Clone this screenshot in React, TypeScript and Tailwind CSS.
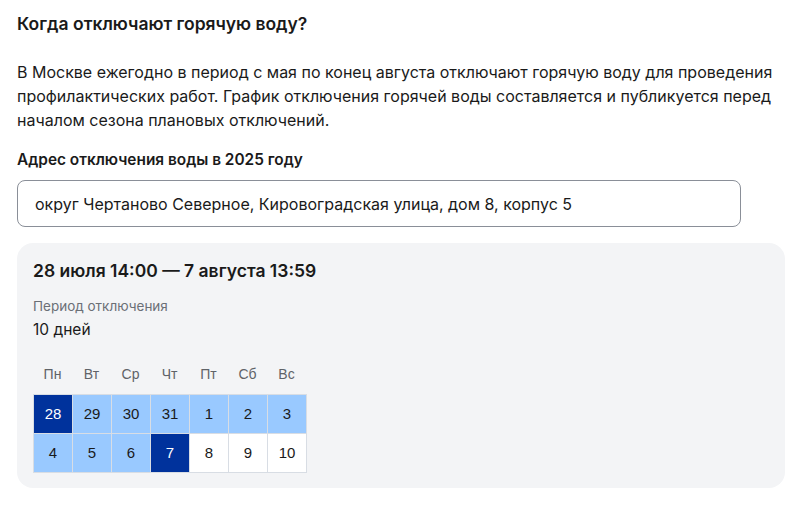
const days = [
  { d: 28, kind: "edge" },
  { d: 29, kind: "in" },
  { d: 30, kind: "in" },
  { d: 31, kind: "in" },
  { d: 1, kind: "in" },
  { d: 2, kind: "in" },
  { d: 3, kind: "in" },
  { d: 4, kind: "in" },
  { d: 5, kind: "in" },
  { d: 6, kind: "in" },
  { d: 7, kind: "edge" },
  { d: 8, kind: "out" },
  { d: 9, kind: "out" },
  { d: 10, kind: "out" },
]

const weekDays = ["Пн", "Вт", "Ср", "Чт", "Пт", "Сб", "Вс"]

const cellClass = (kind: string) => {
  if (kind === "edge") return "bg-[#00329c] text-white"
  if (kind === "in") return "bg-[#99c9ff] text-[#1a1a1a]"
  return "bg-white text-[#1a1a1a]"
}

export default function App() {
  return (
    <div className="min-h-screen bg-white text-[#1a1a1a] font-['Inter',sans-serif] px-[17px] pt-[12px]">
      {/*Header*/}
      <h2 className="text-[17.5px] font-semibold leading-[24px]">Когда отключают горячую воду?</h2>

      <p className="mt-[24px] text-[16px] leading-[24px]">
        В Москве ежегодно в период с мая по конец августа отключают горячую воду для проведения
        профилактических работ. График отключения горячей воды составляется и публикуется перед
        началом сезона плановых отключений.
      </p>

      {/*Address*/}
      <div className="mt-[17px] text-[15.4px] font-semibold leading-[22px]">Адрес отключения воды в 2025 году</div>
      <div className="mt-[9px] w-[724px] h-[47px] border border-[#8a8f98] rounded-[8px] flex items-center px-[17px] text-[16px]">
        округ Чертаново Северное, Кировоградская улица, дом 8, корпус 5
      </div>

      {/*Card*/}
      <div className="mt-[16px] w-[768px] bg-[#f3f4f6] rounded-[16px] px-[16px] pt-[16px] pb-[15px]">
        <div className="text-[17.5px] font-semibold leading-[24px]">28 июля 14:00 — 7 августа 13:59</div>
        <div className="mt-[14px] text-[13.5px] text-[#6b6f76] leading-[18px]">Период отключения</div>
        <div className="mt-[4px] text-[15.5px] leading-[22px]">10 дней</div>

        <div className="mt-[13px] font-['Liberation_Sans',Arial,sans-serif]">
          <div className="grid grid-cols-[repeat(7,39px)] text-[14px] text-[#5f6368] h-[40px] items-center">
            {weekDays.map((w) => (
              <div key={w} className="text-center">{w}</div>
            ))}
          </div>
          <div className="grid grid-cols-[repeat(7,39px)] w-fit border-l border-t border-[#d8dde4]">
            {days.map((c, i) => (
              <div
                key={i}
                className={`h-[39px] flex items-center justify-center text-[15px] border-r border-b border-[#d8dde4] ${cellClass(c.kind)}`}
              >
                {c.d}
              </div>
            ))}
          </div>
        </div>
      </div>
    </div>
  )
}
